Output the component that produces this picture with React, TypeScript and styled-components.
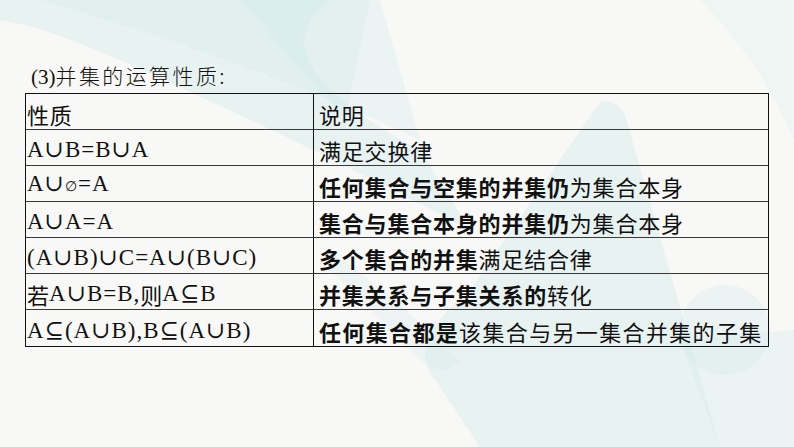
import React from "react";
import styled, { createGlobalStyle } from "styled-components";

const Global = createGlobalStyle`
  html, body { margin: 0; padding: 0; }
  body { background: #f8f8f6; }
`;

const Page = styled.div`
  position: relative;
  width: 794px;
  height: 447px;
  overflow: hidden;
  background: #f8f8f6;
  box-sizing: border-box;
  padding: 62px 25px 0 25px;
  display: flex;
  flex-direction: column;
`;

const Backdrop = styled.svg`
  position: absolute;
  left: 0;
  top: 0;
  width: 794px;
  height: 447px;
  z-index: 0;
`;

const Content = styled.div`
  position: relative;
  z-index: 1;
  display: flex;
  flex-direction: column;
`;

const Title = styled.div`
  padding-left: 6px;
  height: 31px;
  font-size: 21px;
  line-height: 26px;
  color: #111;
  font-family: "Liberation Serif", "Noto Sans CJK SC", serif;
`;

const TitleCjk = styled.span`
  font-family: "Noto Sans CJK SC", sans-serif;
  font-weight: 300;
  letter-spacing: 2.4px;
`;

const Table = styled.div`
  display: grid;
  grid-template-columns: 288px 1fr;
  width: 744px;
  border: 1px solid #111;
  box-sizing: border-box;
`;

const Cell = styled.div<{ $last?: boolean; $right?: boolean }>`
  height: 36px;
  box-sizing: border-box;
  display: flex;
  align-items: flex-end;
  padding: 0 0 1px ${(p) => (p.$right ? "5px" : "1px")};
  border-bottom: ${(p) => (p.$last ? "none" : "1.5px solid #3a3a3a")};
  border-right: ${(p) => (p.$right ? "none" : "1px solid #111")};
  white-space: nowrap;
  color: #111;
  font-family: "Liberation Serif", serif;
`;

const Formula = styled.span`
  font-family: "Liberation Serif", "DejaVu Serif", serif;
  font-size: 23px;
  line-height: 28px;
  letter-spacing: 1px;
`;

const EmptySet = styled.span`
  font-family: "DejaVu Sans", sans-serif;
  font-size: 14px;
  letter-spacing: 1px;
`;

const Cjk = styled.span<{ $bold?: boolean; $wide?: boolean }>`
  font-family: "Noto Sans CJK SC", sans-serif;
  font-size: 22px;
  line-height: 28px;
  font-weight: ${(p) => (p.$bold ? 700 : 400)};
  letter-spacing: ${(p) => (p.$wide ? "1.35px" : "0.8px")};
`;

const Glyph = styled.span`
  font-family: "Noto Sans CJK SC", sans-serif;
  font-size: 22px;
  line-height: 28px;
`;

type Seg = { t: string; b?: boolean };
type Row = { left: React.ReactNode; right: Seg[]; wide?: boolean };

const rows: Row[] = [
  { left: <Cjk>性质</Cjk>, right: [{ t: "说明" }] },
  { left: <Formula>A∪B=B∪A</Formula>, right: [{ t: "满足交换律" }] },
  {
    left: (
      <Formula>
        A∪<EmptySet>∅</EmptySet>=A
      </Formula>
    ),
    right: [{ t: "任何集合与空集的并集仍", b: true }, { t: "为集合本身" }],
  },
  {
    left: <Formula>A∪A=A</Formula>,
    right: [{ t: "集合与集合本身的并集仍", b: true }, { t: "为集合本身" }],
  },
  {
    left: <Formula>(A∪B)∪C=A∪(B∪C)</Formula>,
    right: [{ t: "多个集合的并集", b: true }, { t: "满足结合律" }],
  },
  {
    left: (
      <>
        <Glyph>若</Glyph>
        <Formula>A∪B=B,</Formula>
        <Glyph>则</Glyph>
        <Formula>A⊆B</Formula>
      </>
    ),
    right: [{ t: "并集关系与子集关系的", b: true }, { t: "转化" }],
  },
  {
    left: <Formula>A⊆(A∪B),B⊆(A∪B)</Formula>,
    right: [{ t: "任何集合都是", b: true }, { t: "该集合与另一集合并集的子集" }],
    wide: true,
  },
];

export default function App() {
  return (
    <>
      <Global />
      <Page>
        <Backdrop viewBox="0 0 794 447">
          <g fill="#cfe9ec">
            <path d="M0 0 L330 0 Q250 60 420 150 L470 230 Q300 140 120 60 Q40 25 0 20 Z" opacity="0.4" />
            <path d="M40 0 L380 0 L420 140 Q250 60 40 0 Z" opacity="0.3" />
            <path d="M240 0 L370 0 L345 120 Z" opacity="0.3" />
            <path d="M600 102 Q615 98 625 115 L720 447 L480 447 L430 372 Q410 340 470 290 Z" opacity="0.4" />
            <path d="M330 250 Q400 300 460 362 Q440 378 420 360 L330 270 Z" opacity="0.25" />
            <path d="M680 340 L794 330 L794 447 L720 447 Z" opacity="0.3" />
            <circle cx="725" cy="330" r="45" opacity="0.3" />
            <path d="M700 0 L794 0 L794 140 Q760 60 700 0 Z" opacity="0.2" />
          </g>
        </Backdrop>
        <Content>
          <Title>
            (3)<TitleCjk>并集的运算性质:</TitleCjk>
          </Title>
          <Table>
            {rows.map((r, i) => {
              const last = i === rows.length - 1;
              return (
                <React.Fragment key={i}>
                  <Cell $last={last}>{r.left}</Cell>
                  <Cell $last={last} $right>
                    {r.right.map((s, j) => (
                      <Cjk key={j} $bold={s.b} $wide={r.wide}>
                        {s.t}
                      </Cjk>
                    ))}
                  </Cell>
                </React.Fragment>
              );
            })}
          </Table>
        </Content>
      </Page>
    </>
  );
}
